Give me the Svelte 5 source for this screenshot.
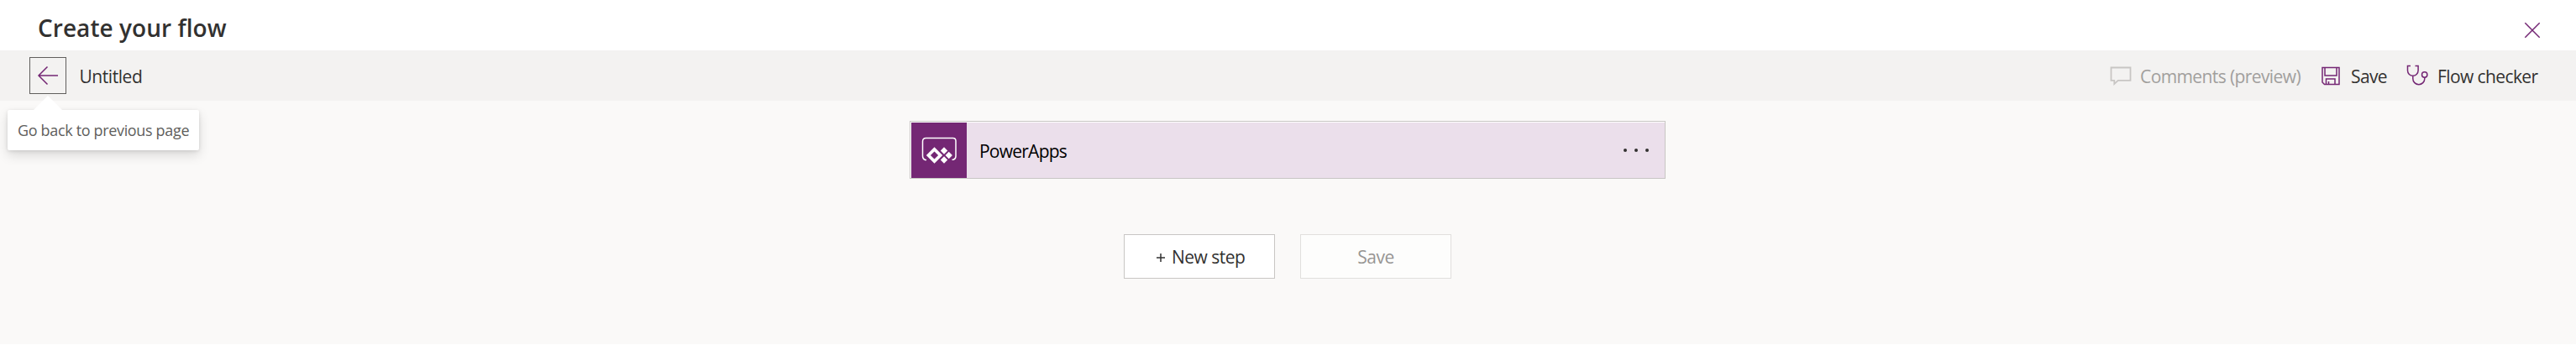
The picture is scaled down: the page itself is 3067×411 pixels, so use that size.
<script>
  let title = $state('Untitled');
</script>

<div class="page">
  <header>
    <h1>Create your flow</h1>
    <button class="close" aria-label="Close">
      <svg width="20" height="20" viewBox="0 0 20 20"><path d="M1.3 1.3 18.7 18.7M18.7 1.3 1.3 18.7" /></svg>
    </button>
  </header>

  <div class="bar">
    <div class="back-wrap">
      <button class="back" aria-label="Back">
        <svg width="26" height="24" viewBox="0 0 26 24"><path d="M25 12H2M12.5 1.5 2 12l10.500 10.500" /></svg>
      </button>
      <div class="tooltip" role="tooltip">
        <svg class="beak" width="36" height="18" viewBox="0 0 36 18"><path d="M0 18 18 0l18 18z" /></svg>
        <span>Go back to previous page</span>
      </div>
    </div>
    <span class="name">{title}</span>
    <div class="commands">
      <button class="cmd comments" disabled>
        <svg width="26" height="24" viewBox="0 0 26 24"><path d="M1.500 2.500h23v15.300H9.800L5.300 22v-4.200H1.500z" /></svg>
        <span>Comments (preview)</span>
      </button>
      <button class="cmd save">
        <svg width="22" height="24" viewBox="0 0 22 24"><path d="M1 2.500h20v20H3.500L1 20zM4 2.500v9.500h14V2.500M5.500 22.500V16h10.500v6.500M8.500 22.500v-3.500" /></svg>
        <span>Save</span>
      </button>
      <button class="cmd checker">
        <svg width="26" height="26" viewBox="0 0 26 26"><path d="M5 1.500H1.500V7a6.300 6.300 0 0 0 12.600 0V1.500h-3.600M7.800 13.300v3.400a7 7 0 0 0 14 0v-1.700" /><circle cx="21.700" cy="12" r="3.200" /></svg>
        <span>Flow checker</span>
      </button>
    </div>
  </div>

  <main>
    <section class="card">
      <div class="tile">
        <svg width="42" height="32" viewBox="0 0 42 32">
          <path class="frame" d="M6 27.500H4.500Q1.500 26.500 1.500 23V5.500Q1.500 1.500 5.500 1.500H37.500Q41 1.500 41 5V23Q41 26.500 38 27.300H36.500" />
          <path class="mark" fill-rule="evenodd" d="M15.500 12.300 25.200 22l-9.700 9.700L5.800 22zM15.500 17.400 10.900 22l4.600 4.600 4.600-4.600z" />
          <path class="mark" d="m27 12.300 4.200 4.200-4.200 4.200-4.200-4.200zM32.700 17.800l4.200 4.200-4.200 4.200-4.200-4.200zM27 23.300l4.200 4.200-4.200 4.200-4.200-4.200z" />
        </svg>
      </div>
      <span class="label">PowerApps</span>
      <button class="more" aria-label="More"><i></i><i></i><i></i></button>
    </section>
    <div class="actions">
      <button class="action new">
        <svg width="10" height="10" viewBox="0 0 10 10"><path d="M0 5h10M5 0v10" /></svg>
        <span>New step</span>
      </button>
      <button class="action" disabled>Save</button>
    </div>
  </main>
</div>

<style>
  :global(body) { background: #fff; }
  * { box-sizing: border-box; }
  .page {
    height: 411px;
    display: flex;
    flex-direction: column;
    font: 21px/30px "Open Sans", "Noto Sans", sans-serif;
    color: #323130;
  }
  button {
    font: inherit;
    color: inherit;
    letter-spacing: inherit;
    background: none;
    border: 0;
    padding: 0;
    border-radius: 0;
  }
  svg { display: block; fill: none; stroke: #742774; stroke-width: 1.5; flex: none; }
  header {
    height: 60px;
    display: flex;
    justify-content: space-between;
    align-items: flex-start;
    padding: 13px 42px 0 45px;
  }
  h1 { margin: 0; font-size: 28px; line-height: 40px; font-weight: 600; letter-spacing: .05px; }
  .close { margin-top: 13px; }
  .bar {
    height: 60px;
    display: flex;
    align-items: center;
    background: #f3f2f1;
    padding: 0 45px 0 35px;
  }
  .back-wrap { position: relative; width: 44px; height: 44px; }
  .back {
    width: 44px;
    height: 44px;
    border: 1px solid #605e5c;
    display: flex;
    align-items: center;
    padding-left: 8px;
  }
  .tooltip {
    position: absolute;
    z-index: 1;
    left: -26px;
    top: 63px;
    width: 228px;
    height: 48px;
    border-radius: 2px;
    background: #fff;
    box-shadow: 0 6px 14px rgba(0, 0, 0, .13), 0 1px 4px rgba(0, 0, 0, .11);
    display: flex;
    align-items: center;
    padding-left: 12px;
    font-size: 18px;
    letter-spacing: -.34px;
    white-space: nowrap;
    color: #605e5c;
  }
  .beak { position: absolute; left: 30px; top: -17px; fill: #fff; stroke: none; }
  .name { margin: 2px 0 0 15.500px; letter-spacing: -.45px; }
  .commands { margin-left: auto; display: flex; align-items: center; }
  .cmd { display: flex; align-items: center; letter-spacing: -.6px; white-space: nowrap; }
  .cmd span { padding-top: 2px; }
  .comments { color: #a19f9d; width: 252px; gap: 10px; }
  .comments svg { stroke: #c8c6c4; stroke-width: 1.8; }
  .save { width: 101px; gap: 13px; }
  .checker { width: 157px; gap: 11px; }
  main {
    height: 290px;
    background: #faf9f8;
    display: flex;
    flex-direction: column;
    align-items: center;
    padding: 24px 1px 0 0;
  }
  .card {
    width: 900px;
    height: 69px;
    border: 1px solid #c8c6c4;
    padding: 1px 0 0 1px;
    background: linear-gradient(#ebdfeb, #ebdfeb) content-box, #fff;
    display: flex;
    align-items: center;
    color: #000;
  }
  .tile { width: 66px; height: 66px; background: #742774; padding: 17px 0 0 12px; }
  .frame { stroke: #fff; stroke-width: 1.5; }
  .mark { stroke: none; fill: #fff; }
  .label { margin: 1px 0 0 15px; letter-spacing: -.76px; }
  .more { margin: 0 19px 0 auto; display: flex; gap: 8.300px; }
  .more i { width: 4.500px; height: 4.500px; border-radius: 50%; background: #323130; }
  .actions { display: flex; gap: 30px; margin-top: 66px; }
  .action {
    width: 180px;
    height: 53px;
    border: 1px solid #c8c6c4;
    background: #fff;
    letter-spacing: -.5px;
    display: flex;
    align-items: center;
    justify-content: center;
  }
  .action:disabled { border-color: #e1dfdd; background: #fdfdfc; color: #979593; }
  .new { gap: 8px; justify-content: flex-start; padding-left: 38px; }
  .new svg { stroke: #323130; margin-top: 3px; }
</style>
